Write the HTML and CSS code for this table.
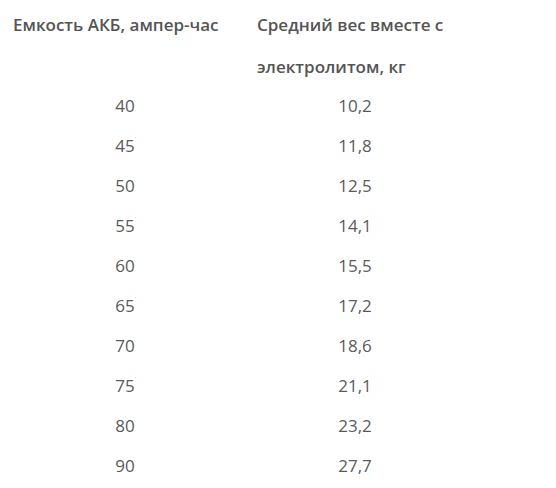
FILE: index.html
```html
<!DOCTYPE html>
<html lang="ru">
<head>
<meta charset="utf-8">
<link rel="stylesheet" href="styles.css">
</head>
<body>
<div class="tbl">
  <div class="row head">
    <div class="c1">Емкость АКБ, ампер-час</div>
    <div class="c2">Средний вес вместе с электролитом, кг</div>
  </div>
  <div class="row"><div class="c1">40</div><div class="c2">10,2</div></div>
  <div class="row"><div class="c1">45</div><div class="c2">11,8</div></div>
  <div class="row"><div class="c1">50</div><div class="c2">12,5</div></div>
  <div class="row"><div class="c1">55</div><div class="c2">14,1</div></div>
  <div class="row"><div class="c1">60</div><div class="c2">15,5</div></div>
  <div class="row"><div class="c1">65</div><div class="c2">17,2</div></div>
  <div class="row"><div class="c1">70</div><div class="c2">18,6</div></div>
  <div class="row"><div class="c1">75</div><div class="c2">21,1</div></div>
  <div class="row"><div class="c1">80</div><div class="c2">23,2</div></div>
  <div class="row"><div class="c1">90</div><div class="c2">27,7</div></div>
</div>
</body>
</html>
```
FILE: styles.css
```css
html, body {
  margin: 0;
  padding: 0;
  background: #fff;
}
body {
  font-family: "Open Sans", "Noto Sans", sans-serif;
  font-size: 17px;
  color: #5a5a5a;
}
.tbl {
  width: 466px;
  margin-left: 3px;
  padding-top: 4px;
}
.row {
  display: grid;
  grid-template-columns: 244px 216px;
}
.row > div {
  padding: 0 10px;
  line-height: 40px;
  text-align: center;
}
.head {
  margin-bottom: -2px;
}
.head > div {
  text-align: left;
  font-weight: 600;
  line-height: 42px;
  color: #555;
}
```
